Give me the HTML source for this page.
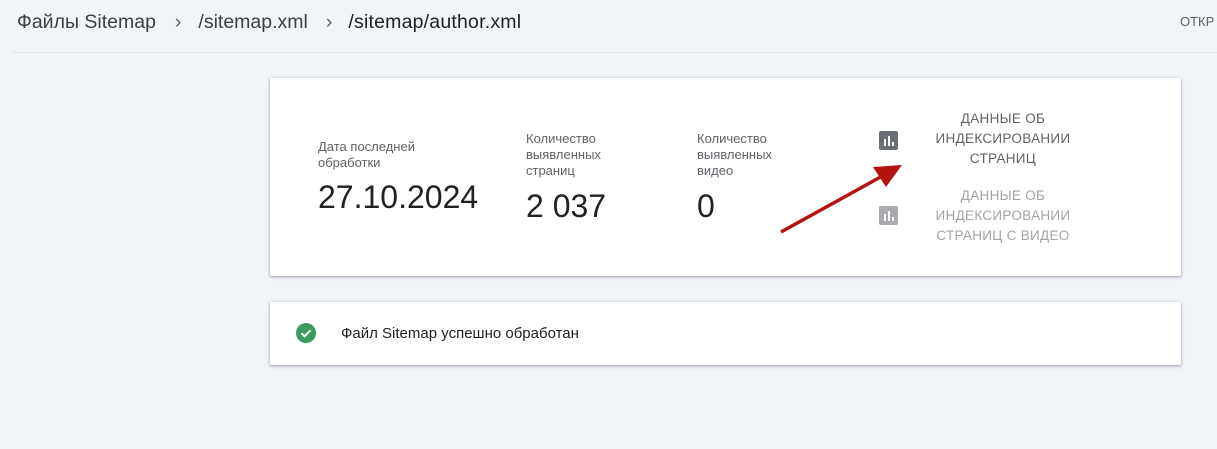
<!DOCTYPE html>
<html><head><meta charset="utf-8"><style>
body{margin:0;width:1217px;height:449px;background:#f1f4f9;font-family:"Liberation Sans",sans-serif;position:relative;overflow:hidden;color:#202124}
.a{position:absolute}
.card{position:absolute;background:#fff;box-shadow:0 1px 2px rgba(60,64,67,.3),0 1px 3px 1px rgba(60,64,67,.15);border-radius:2px}
.lbl{font-size:13px;color:#5f6368;line-height:16px}
.big{font-size:32px;color:#202124}
.btn{font-size:13.5px;font-weight:normal;text-align:center;line-height:20px;letter-spacing:.3px}
</style></head><body>
<div class="a" style="left:17px;top:11px;font-size:19.5px;color:#3c4043;white-space:nowrap">Файлы Sitemap<span style="margin:0 17px 0 19px;color:#5f6368">›</span>/sitemap.xml<span style="margin:0 16px 0 18px;color:#5f6368">›</span><span style="color:#202124;font-size:19.5px;letter-spacing:.2px">/sitemap/author.xml</span></div>
<div class="a" style="left:1180px;top:14px;font-size:13px;color:#5f6368">ОТКР</div>
<div class="a" style="left:12px;right:0;top:52px;height:1px;background:#e3e6ea"></div>

<div class="card" style="left:270px;top:78px;width:911px;height:198px">
 <div class="a lbl" style="left:48px;top:61px">Дата последней<br>обработки</div>
 <div class="a big" style="left:48px;top:101px">27.10.2024</div>
 <div class="a lbl" style="left:256px;top:53px">Количество<br>выявленных<br>страниц</div>
 <div class="a big" style="left:256px;top:110px">2 037</div>
 <div class="a lbl" style="left:427px;top:53px">Количество<br>выявленных<br>видео</div>
 <div class="a big" style="left:427px;top:110px">0</div>
 <svg class="a" style="left:609px;top:53px" width="19" height="19"><rect width="19" height="19" rx="2" fill="#6b6e72"/><rect x="5" y="8" width="2" height="7" fill="#fff"/><rect x="9" y="5" width="2" height="10" fill="#fff"/><rect x="13" y="11" width="2" height="4" fill="#fff"/></svg>
 <div class="a btn" style="left:638px;top:31px;width:190px;color:#5f6368">ДАННЫЕ ОБ<br>ИНДЕКСИРОВАНИИ<br>СТРАНИЦ</div>
 <svg class="a" style="left:609px;top:128px" width="19" height="19"><rect width="19" height="19" rx="2" fill="#a9abae"/><rect x="5" y="8" width="2" height="7" fill="#fff"/><rect x="9" y="5" width="2" height="10" fill="#fff"/><rect x="13" y="11" width="2" height="4" fill="#fff"/></svg>
 <div class="a btn" style="left:638px;top:108px;width:190px;color:#a0a3a7">ДАННЫЕ ОБ<br>ИНДЕКСИРОВАНИИ<br>СТРАНИЦ С ВИДЕО</div>
</div>
<svg class="a" style="left:0;top:0" width="1217" height="449"><line x1="781" y1="232" x2="886" y2="174" stroke="#b3140f" stroke-width="3.5"/><polygon points="902,165 873,167 886,187" fill="#b3140f"/></svg>

<div class="card" style="left:270px;top:302px;width:911px;height:63px">
 <svg class="a" style="left:26px;top:21px" width="20" height="20"><circle cx="10" cy="10" r="10" fill="#3c9a5f"/><path d="M5.5 10.3l3 3 6-6" stroke="#fff" stroke-width="2" fill="none"/></svg>
 <div class="a" style="left:71px;top:23px;font-size:15px;color:#202124">Файл Sitemap успешно обработан</div>
</div>
</body></html>
